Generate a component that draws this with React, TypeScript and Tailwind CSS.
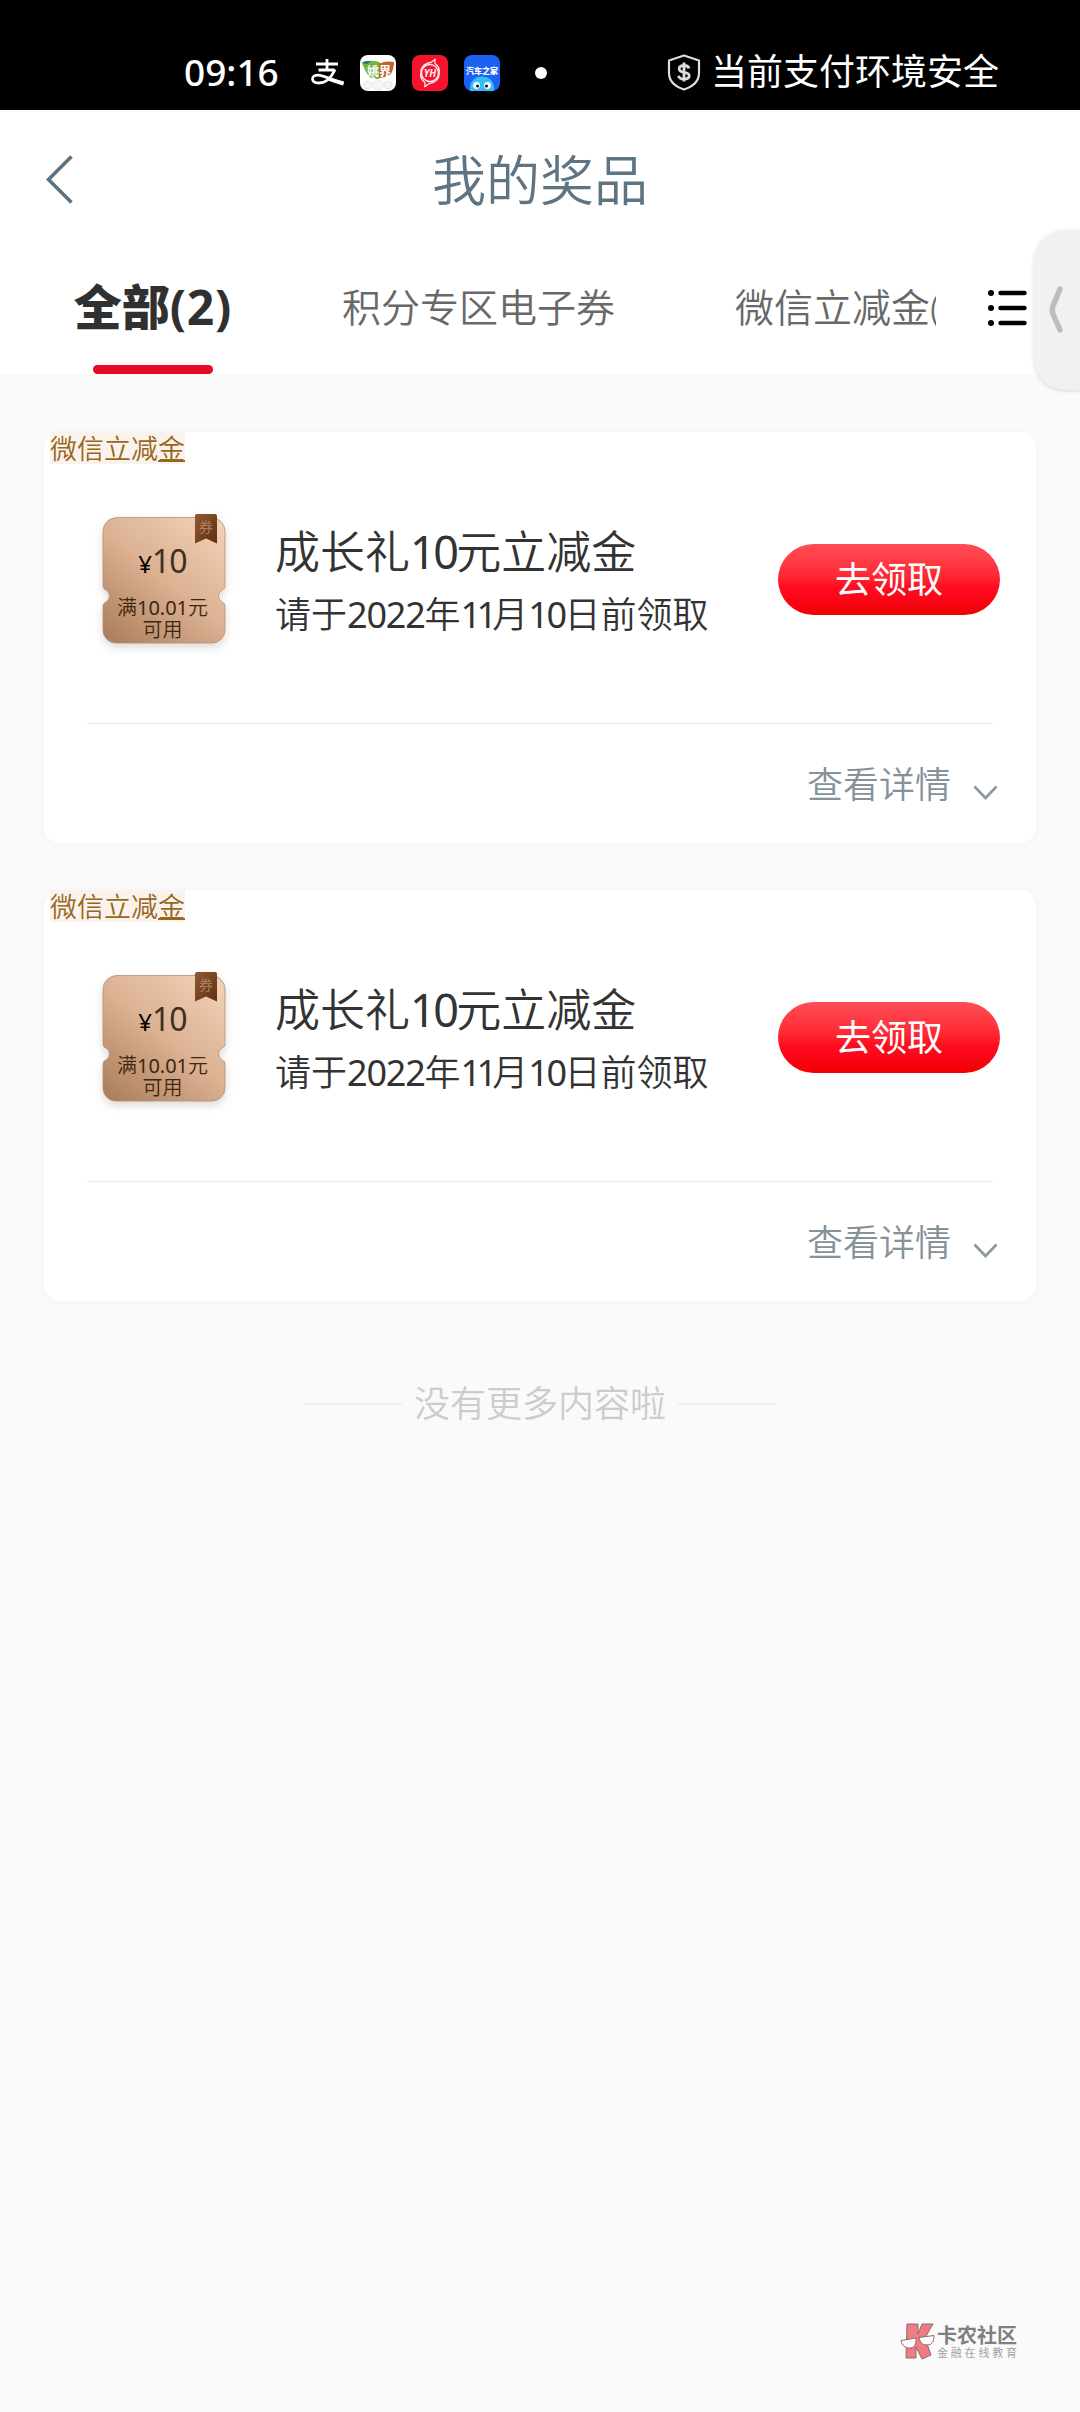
import React from "react";

const prizes = [
  { id: 1, tag: "微信立减金", amount: "10", limit: "10.01" },
  { id: 2, tag: "微信立减金", amount: "10", limit: "10.01" },
];

const StatusBar = () => {
  return (
    <div className="flex h-[110px] items-start bg-black pt-[48px] text-white">
      <span className="-mt-px ml-[184px] w-[97px] text-[37px] leading-[50px] font-medium">
        09:16
      </span>

      {/* Alipay */}
      <svg className="mt-[11px] ml-[30px]" width="34" height="28" viewBox="0 0 34 28" fill="none" stroke="#fff" strokeWidth="2.800">
        <path d="M5 5h22M16 0v11M7.500 11h16" />
        <path d="M24 10.500c-3 6.500-8.500 13.500-16 13.500-4.500 0-6.500-1.800-6.500-4 0-2.300 2.300-3.800 5.300-3.800 6 0 14.200 4.800 25.700 8.300" />
        <path d="M17 19.500c5 2 10 3.500 15.500 5" strokeWidth="4" />
      </svg>

      <svg className="mt-[7px] ml-[15px]" width="36" height="36" viewBox="0 0 36 36">
        <rect width="36" height="36" rx="8" fill="#fff" />
        <path d="M2 8c5-3 13-3 19 0l3 10c-2 4-4 6-8 6l-2-2c-2 1-4 1-5-1-3-3-5-8-7-13z" fill="#72b63c" />
        <path d="M19 9c5-3 10-3 15-2 0 4-1 8-3 12-3 2-4 1-6 3l-6 1z" fill="#c2622f" />
        <path d="M2 8c2-2 5-2 9-2l-4 3z" fill="#276b86" />
        <text x="19" y="20.500" textAnchor="middle" fontSize="12" fontWeight="700" fill="#fff">姚界</text>
        <g fill="#f6f6f6" stroke="#e2e2e2" strokeWidth="0.800">
          <circle cx="8" cy="30" r="4" />
          <circle cx="28" cy="30" r="4" />
          <circle cx="18" cy="30" r="5" />
        </g>
      </svg>

      <svg className="mt-[7px] ml-[16px]" width="36" height="36" viewBox="0 0 36 36">
        <rect width="36" height="36" rx="8" fill="#f5142d" />
        <circle cx="18" cy="18" r="8.500" fill="none" stroke="#ffe9ea" strokeWidth="1.400" />
        <path d="M9.500 22C7 14 11 8.500 19 7.500l4.500-3.500c-1 2-1 3.500 0 5 3 2 4 5 4 8M26.500 14c2.500 8-1.500 13.500-9.500 14.500L12.500 32c1-2 1-3.500 0-5-3-2-4-5-4-8" fill="none" stroke="#ffe9ea" strokeWidth="1.300" />
        <text x="18" y="21.700" textAnchor="middle" fontSize="10" fontWeight="700" fontStyle="italic" fill="#ffe9ea">YH</text>
      </svg>

      <svg className="mt-[7px] ml-[16px]" width="36" height="36" viewBox="0 0 36 36">
        <rect width="36" height="36" rx="8" fill="#1c62f2" />
        <text x="18" y="18.500" textAnchor="middle" fontSize="8" fontWeight="900" fill="#fff">汽车之家</text>
        <path d="M6 36c-1-9 4-14.500 12-14.500S31 27 30 36z" fill="#35bdf5" />
        <circle cx="12.500" cy="30.500" r="3.400" fill="#fff" />
        <circle cx="23.500" cy="30.500" r="3.400" fill="#fff" />
        <circle cx="13.500" cy="31" r="1.500" fill="#111" />
        <circle cx="22.500" cy="31" r="1.500" fill="#111" />
      </svg>

      <span className="mt-[19px] ml-[35px] h-3 w-3 rounded-full bg-white" />

      {/* Payment safety */}
      <svg className="mt-[6px] ml-[120px]" width="34" height="37" viewBox="0 0 34 37" fill="none" stroke="#ddd" strokeWidth="2.200">
        <path d="M17 1.500 32 6.500V19c0 8-6 13.500-15 16.500C8 32.500 2 27 2 19V6.500z" strokeLinejoin="round" />
        <path d="M22 14.500c-.5-2-2.500-3-5-3s-4.800 1-4.800 3.400c0 4.800 10 2 10 6.700 0 2.400-2.200 3.600-5.200 3.600s-5-1.200-5.500-3.400M17 8.500v19" strokeWidth="2.800" />
      </svg>
      <span className="ml-[10px] text-[36px] leading-[48px] font-normal">
        当前支付环境安全
      </span>
    </div>
  );
};

const Header = () => {
  return (
    <div className="flex h-[140px] items-center bg-white">
      <svg className="ml-[46px] w-[28px]" width="28" height="50" viewBox="0 0 28 50" fill="none" stroke="#5b7282" strokeWidth="3.600">
        <path d="M25.500 1.500 2.500 24.500l23 23" />
      </svg>
      <h1 className="mr-[74px] grow text-center text-[54px] leading-[80px] text-[#5e7482]">
        我的奖品
      </h1>
    </div>
  );
};

const Tabs = () => {
  return (
    <div className="flex h-[124px] bg-white">
      <div className="flex w-[936px] overflow-hidden whitespace-nowrap">
        <div className="ml-[73px] flex w-[160px] shrink-0 flex-col items-center">
          <span className="mt-[21px] text-[48px] leading-[72px] font-black text-[#303030]">
            全部<span className="font-bold tracking-[0.800px]">(2)</span>
          </span>
          <span className="mt-[22px] h-[9px] w-[120px] rounded-full bg-[#e60a26]" />
        </div>
        <span className="mt-[27px] ml-[109px] w-[274px] shrink-0 text-[39px] leading-[60px] text-[#686868]">
          积分专区电子券
        </span>
        <span className="mt-[27px] ml-[119px] shrink-0 text-[39px] leading-[60px] text-[#686868]">
          微信立减金(2)
        </span>
      </div>
      <svg className="mt-[39px] ml-[52px]" width="40" height="38" viewBox="0 0 40 38" stroke="#000" strokeLinecap="round">
        <path d="M12.500 4H36.500M12.500 19H36.500M12.500 34H36.500" strokeWidth="4.400" />
        <path d="M3 4h.01M3 19h.01M3 34h.01" strokeWidth="6" />
      </svg>
    </div>
  );
};

const Coupon = ({ id, amount, limit }: { id: number; amount: string; limit: string }) => {
  return (
    <div className="relative h-[130px] w-[122px]">
      <svg className="absolute inset-0 overflow-visible drop-shadow-[0_4px_4px_rgba(90,70,60,0.200)]" width="122" height="130" viewBox="0 0 122 130">
        <defs>
          <linearGradient id={"coupon" + id} x1="0.900" y1="0" x2="0.100" y2="1">
            <stop offset="0" stopColor="#f2d0b6" />
            <stop offset="0.500" stopColor="#dbb192" />
            <stop offset="1" stopColor="#ad7f5d" />
          </linearGradient>
          <linearGradient id={"ribbon" + id} x1="0" y1="0" x2="1" y2="1">
            <stop offset="0" stopColor="#8f5a35" />
            <stop offset="1" stopColor="#5f2f10" />
          </linearGradient>
        </defs>
        <path
          d="M14 3.500h94a14 14 0 0 1 14 14V72q0 3-3 4a7 7 0 0 0 0 12q3 1 3 4v24a13 13 0 0 1-13 13H13a13 13 0 0 1-13-13V92q0-3 3-4a7 7 0 0 0 0-12q-3-1-3-4V17.500a14 14 0 0 1 14-14z"
          fill={"url(#coupon" + id + ")"}
          stroke="#b48f76"
          strokeWidth="0.800"
        />
        <path d="M92 2q0-2 2-2h18q2 0 2 2v27.500l-11-5-11 5z" fill={"url(#ribbon" + id + ")"} />
        <text x="103" y="18" textAnchor="middle" fontSize="14" fill="#b98a68">券</text>
      </svg>
      <div className="relative mr-[3px] flex flex-col items-center pt-[27px]">
        <div className="flex h-[40px] items-baseline leading-[40px] font-normal">
          <span className="text-[24px] text-black">¥</span>
          <span className="text-[32px] tracking-[-1px] text-[#40301f]">{amount}</span>
        </div>
        <div className="mt-[16px] text-[20px] leading-[22px] text-[#40260f]">
          满<span className="font-normal">{limit}</span>元
        </div>
        <div className="text-[20px] leading-[22px] text-[#40260f]">可用</div>
      </div>
    </div>
  );
};

const PrizeCard = ({ prize }: { prize: (typeof prizes)[0] }) => {
  return (
    <div className="flex h-[411px] flex-col rounded-[16px] bg-white shadow-[0_0_12px_rgba(0,0,0,0.030)]">
      <span className="ml-[6px] h-[32px] w-[135px] bg-[#faf2ec] text-[27px] leading-[33px] whitespace-nowrap text-[#98661c]">
        微信立减<span className="underline decoration-2 underline-offset-1">金</span>
      </span>

      <div className="mx-[43px] flex h-[260px] border-b border-[#ebebeb]">
        <div className="mt-[50px] ml-[16px]">
          <Coupon id={prize.id} amount={prize.amount} limit={prize.limit} />
        </div>
        <div className="mt-[57px] ml-[50px] whitespace-nowrap text-[#333]">
          <h2 className="text-[45px] leading-[62px]">
            成长礼<span className="font-normal tracking-[-2.600px]">10</span>元立减金
          </h2>
          <p className="mt-[2px] text-[36px] leading-[60px]">
            请于<span className="font-normal tracking-[-1.200px]">2022</span>年
            <span className="font-normal tracking-[-4.800px]">11</span>月
            <span className="font-normal tracking-[-2.400px]">10</span>日前领取
          </p>
        </div>
        <button className="mt-[80px] mr-[-7px] ml-auto h-[71px] w-[222px] rounded-full bg-linear-to-b from-[#ff4c56] via-[#ff0c22] via-60% to-[#f20000] text-[36px] leading-[70px] font-normal text-white">
          去领取
        </button>
      </div>

      <div className="mr-[38px] flex items-center justify-end pt-[31px] text-[36px] leading-[60px] text-[#86929a]">
        查看详情
        <svg className="mt-[15px] ml-[22px]" width="25" height="16" viewBox="0 0 25 16" fill="none" stroke="#8c979e" strokeWidth="2.600">
          <path d="M1.500 1.500l11 11.500 11-11.500" />
        </svg>
      </div>
    </div>
  );
};

const Watermark = () => {
  return (
    <div className="mr-[60px] flex items-center justify-end">
      <svg width="36" height="38" viewBox="0 0 36 38" stroke="#8a6a6c" strokeWidth="1">
        <path d="M7 1h11v10l4-10h11l-8 14 6 17-9 4-6-12v11H6z" fill="#ef7c84" />
        <path d="M1 17.500l15-2.500c.5 7-2 10-6.500 10S2 22.500 1 17.500zM19 14.500l15-2c0 6-2 9.500-7 9.500s-7-3-8-7.500z" fill="#fff" />
      </svg>
      <div className="w-[84px] pl-px whitespace-nowrap">
        <div className="text-[20px] leading-[20px] font-bold text-[#7f7f7f]">卡农社区</div>
        <div className="text-[11px] leading-[13px] font-normal tracking-[2.800px] text-[#a2a2a2]">
          金融在线教育
        </div>
      </div>
    </div>
  );
};

const App = () => {
  return (
    <div className="relative flex h-[2412px] w-[1080px] flex-col overflow-hidden bg-[#fafafa] font-['Noto_Sans','Noto_Sans_CJK_SC',sans-serif] font-[350]">
      <StatusBar />
      <Header />
      <Tabs />

      <div className="flex flex-col gap-[47px] px-[44px] pt-[58px]">
        {prizes.map((prize) => (
          <PrizeCard key={prize.id} prize={prize} />
        ))}
      </div>

      <div className="mt-[73px] flex items-center justify-center gap-[12px] text-[36px] leading-[60px] text-[#ccc]">
        <span className="h-[2px] w-[97px] bg-[#efefef]" />
        没有更多内容啦
        <span className="h-[2px] w-[97px] bg-[#efefef]" />
      </div>

      <div className="mt-auto mb-[51px]">
        <Watermark />
      </div>

      {/* Floating drawer handle */}
      <div className="absolute top-[230px] right-0 flex h-[160px] w-[46px] items-center rounded-l-[32px] bg-[#f1f1f1] shadow-[0_1px_4px_rgba(0,0,0,0.150)]">
        <svg className="ml-[15px]" width="16" height="50" viewBox="0 0 16 50" fill="none" stroke="#bdbdbd" strokeWidth="5.500" strokeLinecap="round" strokeLinejoin="round">
          <path d="M11 4 4 21q-1.500 4 0 8l7 16" />
        </svg>
      </div>
    </div>
  );
};

export default App;
